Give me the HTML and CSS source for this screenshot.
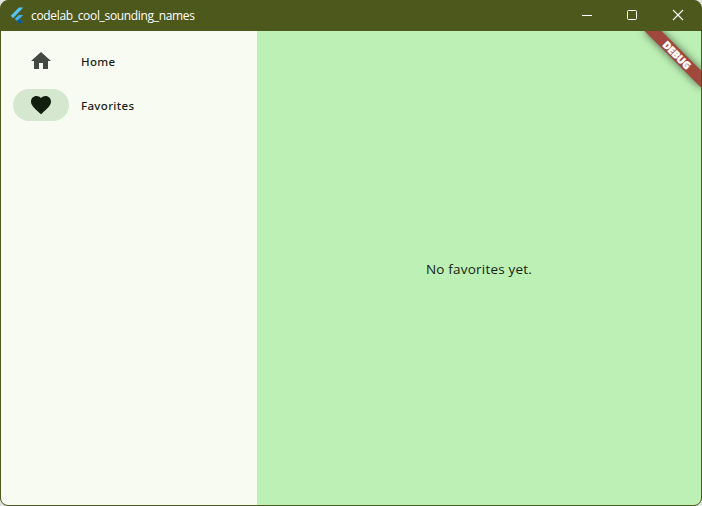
FILE: index.html
```html
<!DOCTYPE html>
<html lang="en">
<head>
<meta charset="utf-8">
<title>codelab_cool_sounding_names</title>
<link rel="stylesheet" href="styles.css">
</head>
<body>
<div class="window">
  <header class="titlebar">
    <svg class="logo" width="14" height="18" viewBox="0 0 14 18">
      <path d="M9 0.5h4.3L3 11.2.8 8.7z" fill="#54c5f8"/>
      <path d="M9 8h4.3l-3.9 3.8 3.9 4.2H9l-4.2-4.2z" fill="#42b5f0"/>
      <path d="M6.8 14 9.2 11.8 13.3 16H9z" fill="#01579b"/>
    </svg>
    <span class="title">codelab_cool_sounding_names</span>
    <div class="controls">
      <svg width="46" height="30" viewBox="0 0 46 30"><path d="M19 14.5h10" stroke="#fff"/></svg>
      <svg width="46" height="30" viewBox="0 0 46 30"><rect x="18.5" y="9.5" width="9" height="9" rx="1" fill="none" stroke="#fff"/></svg>
      <svg width="46" height="30" viewBox="0 0 46 30"><path d="m18 9 10 10m0-10-10 10" stroke="#fff" stroke-width="1.1"/></svg>
    </div>
  </header>
  <div class="content">
    <nav class="rail">
      <a class="item">
        <span class="pill"><svg width="24" height="24" viewBox="0 0 24 24"><path d="M10 20v-6h4v6h5v-8h3L12 3 2 12h3v8z" fill="#424940"/></svg></span>
        <span class="label">Home</span>
      </a>
      <a class="item selected">
        <span class="pill"><svg width="24" height="24" viewBox="0 0 24 24"><path d="m12 21.35-1.45-1.32C5.4 15.36 2 12.28 2 8.5 2 5.42 4.42 3 7.5 3c1.74 0 3.41.81 4.5 2.09C13.09 3.81 14.76 3 16.5 3 19.58 3 22 5.42 22 8.5c0 3.78-3.4 6.86-8.55 11.54z" fill="#111f0f"/></svg></span>
        <span class="label">Favorites</span>
      </a>
    </nav>
    <main class="page"><p class="message">No favorites yet.</p></main>
    <div class="banner">DEBUG</div>
  </div>
</div>
</body>
</html>
```
FILE: styles.css
```css
* { box-sizing: border-box; }
body {
  margin: 0;
  background: #e4e5e2;
  font-family: "Noto Sans", "Open Sans", sans-serif;
}
.window {
  height: 506px;
  display: flex;
  flex-direction: column;
  border: 1px solid #4d591c;
  border-radius: 8px;
  overflow: hidden;
  background: #4d591c;
}
.titlebar {
  flex: 0 0 30px;
  display: flex;
  align-items: center;
  padding-left: 9px;
  color: #fff;
}
.logo { margin-right: 7px; }
.title {
  font-family: "Open Sans", sans-serif;
  font-size: 12px;
  line-height: 16px;
  letter-spacing: -0.33px;
}
.controls { display: flex; margin-left: auto; }
.controls svg { display: block; }
.content {
  position: relative;
  flex: 1;
  display: flex;
  overflow: hidden;
}
.rail {
  width: 256px;
  padding: 14px 12px;
  display: flex;
  flex-direction: column;
  gap: 12px;
  background: #f8fbf2;
}
.item { display: flex; align-items: center; gap: 12px; }
.pill {
  width: 56px;
  height: 32px;
  display: flex;
  align-items: center;
  justify-content: center;
  border-radius: 16px;
}
.selected .pill { background: #d5e8cf; }
.label {
  padding-top: 2px;
  font-size: 11.5px;
  line-height: 16px;
  font-weight: 500;
  letter-spacing: 0.35px;
  color: #191d17;
}
.page {
  flex: 1;
  display: flex;
  align-items: center;
  justify-content: center;
  background: #bcf0b4;
}
.message {
  margin: 0;
  padding-top: 2px;
  font-family: "Open Sans", sans-serif;
  font-size: 13.5px;
  line-height: 20px;
  font-weight: 400;
  letter-spacing: 0.2px;
  color: #191d17;
}
.banner {
  position: absolute;
  left: 636px;
  top: 18px;
  width: 80px;
  height: 12px;
  transform: rotate(45deg);
  background: #a0483b;
  box-shadow: 0 0 8px rgba(0, 0, 0, 0.6);
  color: #fff;
  font-family: "Noto Sans", "Open Sans", sans-serif;
  font-size: 10.2px;
  line-height: 12px;
  font-weight: 900;
  letter-spacing: -0.1px;
  -webkit-text-stroke: 0.4px #fff;
  text-align: center;
}
```
